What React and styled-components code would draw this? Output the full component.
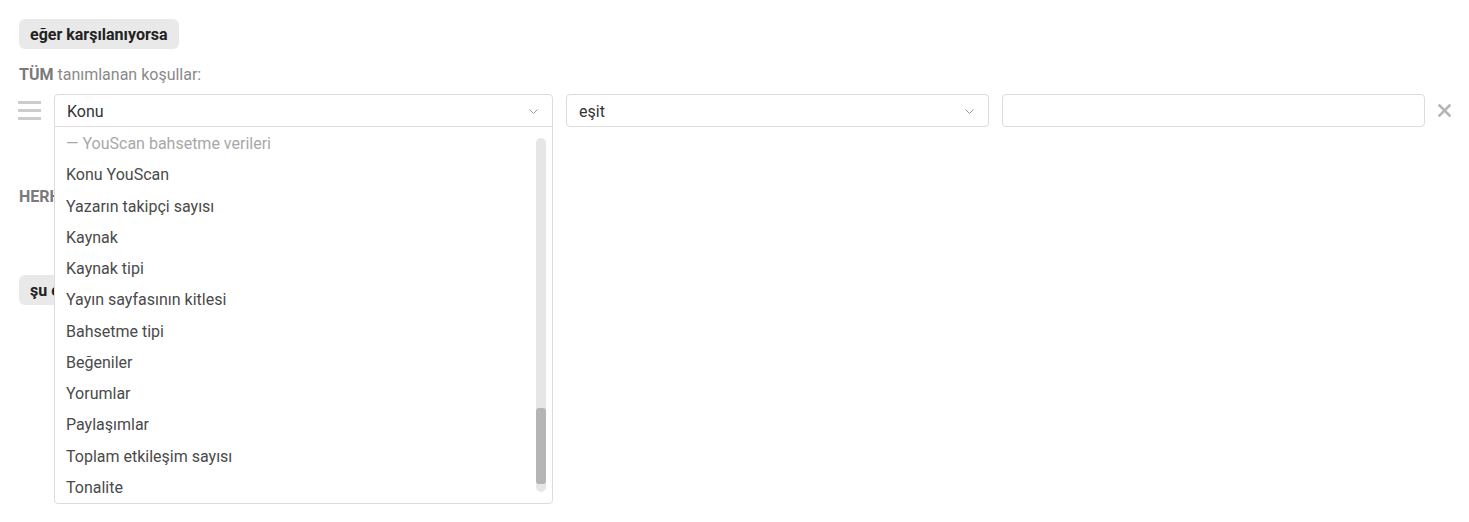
import styled, { createGlobalStyle } from "styled-components";

const GlobalStyle = createGlobalStyle`
  body {
    margin: 0;
    background: #fff;
    font-family: Roboto, "Liberation Sans", sans-serif;
    color: #333;
  }
`;

const options = [
  { label: "— YouScan bahsetme verileri", group: true },
  { label: "Konu YouScan" },
  { label: "Yazarın takipçi sayısı" },
  { label: "Kaynak" },
  { label: "Kaynak tipi" },
  { label: "Yayın sayfasının kitlesi" },
  { label: "Bahsetme tipi" },
  { label: "Beğeniler" },
  { label: "Yorumlar" },
  { label: "Paylaşımlar" },
  { label: "Toplam etkileşim sayısı" },
  { label: "Tonalite" },
];

function Chevron() {
  return (
    <svg width="9" height="5" viewBox="0 0 9 5">
      <path d="M0.5 0.5 L4.5 4.5 L8.5 0.5" fill="none" stroke="#9a9a9a" strokeWidth="1" />
    </svg>
  );
}

function CloseIcon() {
  return (
    <svg width="13" height="13" viewBox="0 0 13 13">
      <path d="M1.5 1.5 L11.5 11.5 M11.5 1.5 L1.5 11.5" stroke="#b5b5b5" strokeWidth="2.6" strokeLinecap="square" />
    </svg>
  );
}

function App() {
  return (
    <>
      <GlobalStyle />
      <Page>
        <Section>
          <Badge>eğer karşılanıyorsa</Badge>
          <Label>
            <b>TÜM</b> tanımlanan koşullar:
          </Label>
          <ConditionRow>
            <Handle>
              <span />
              <span />
              <span />
            </Handle>
            <SelectWrap $grow={499}>
              <SelectBox $open>
                Konu
                <Chevron />
              </SelectBox>
              <Dropdown>
                {options.map((o) => (
                  <Option key={o.label} $group={o.group}>
                    {o.label}
                  </Option>
                ))}
                <ScrollTrack>
                  <ScrollThumb />
                </ScrollTrack>
              </Dropdown>
            </SelectWrap>
            <SelectWrap $grow={423}>
              <SelectBox>
                eşit
                <Chevron />
              </SelectBox>
            </SelectWrap>
            <SelectWrap $grow={423}>
              <TextInput />
            </SelectWrap>
            <RemoveButton>
              <CloseIcon />
            </RemoveButton>
          </ConditionRow>
        </Section>

        <Section $top={44}>
          <Label>
            <b>HERHANGİ</b> tanımlanan koşullar:
          </Label>
          <AddLink>+ koşul ekle</AddLink>
        </Section>

        <Section $top={37}>
          <Badge>şu eylemleri gerçekleştir</Badge>
        </Section>
      </Page>
    </>
  );
}

export default App;

const Page = styled.div`
  box-sizing: border-box;
  min-height: 100vh;
  padding: 19px 0 0 0;
`;

const Section = styled.section`
  padding-top: ${(p) => p.$top || 0}px;
`;

const Badge = styled.div`
  display: inline-flex;
  align-items: center;
  margin-left: 19px;
  height: 30px;
  padding: 0 11px;
  border-radius: 6px;
  background-color: #e9e9e9;
  color: #222;
  font-size: 16px;
  font-weight: 700;
`;

const Label = styled.div`
  margin: 16px 0 0 19px;
  height: 19px;
  font-size: 16px;
  line-height: 19px;
  color: #8a8a8a;

  b {
    color: #7a7a7a;
    font-weight: 700;
  }
`;

const AddLink = styled.div`
  margin: 14px 0 0 54px;
  font-size: 15px;
  color: #3b8ad9;
`;

const ConditionRow = styled.div`
  display: flex;
  align-items: center;
  margin-top: 10px;
  padding: 0 6px 0 18px;
`;

const Handle = styled.div`
  display: flex;
  flex-direction: column;
  gap: 5px;
  width: 36px;
  flex: none;

  span {
    display: block;
    width: 23px;
    height: 3px;
    background-color: #cdcdcd;
  }
`;

const SelectWrap = styled.div`
  position: relative;
  flex: ${(p) => p.$grow} 1 0;
  min-width: 0;

  & + & {
    margin-left: 13px;
  }
`;

const SelectBox = styled.div`
  box-sizing: border-box;
  display: flex;
  align-items: center;
  justify-content: space-between;
  height: 33px;
  padding: 1px 14px 0 12px;
  border: 1px solid #dcdcdc;
  border-radius: ${(p) => (p.$open ? "4px 4px 0 0" : "4px")};
  font-size: 16px;
  color: #333;
  background: #fff;
`;

const TextInput = styled.div`
  box-sizing: border-box;
  height: 33px;
  border: 1px solid #dcdcdc;
  border-radius: 4px;
  background: #fff;
`;

const Dropdown = styled.div`
  position: absolute;
  top: 100%;
  left: 0;
  right: 0;
  box-sizing: border-box;
  margin-top: -1px;
  padding: 1px 0 0;
  border: 1px solid #dcdcdc;
  border-radius: 0 0 4px 4px;
  background: #fff;
  z-index: 10;
`;

const Option = styled.div`
  height: 31.25px;
  line-height: 31.25px;
  padding-left: 11px;
  font-size: 16px;
  color: ${(p) => (p.$group ? "#a8a8a8" : "#4a4a4a")};
  white-space: nowrap;
`;

const ScrollTrack = styled.div`
  position: absolute;
  top: 11px;
  bottom: 11px;
  right: 6px;
  width: 10px;
  border-radius: 5px;
  background-color: #e6e6e6;
`;

const ScrollThumb = styled.div`
  position: absolute;
  left: 0;
  right: 0;
  bottom: 8px;
  height: 76px;
  border-radius: 3px;
  background-color: #b5b5b5;
`;

const RemoveButton = styled.div`
  display: flex;
  justify-content: center;
  align-items: center;
  width: 38px;
  flex: none;
`;
